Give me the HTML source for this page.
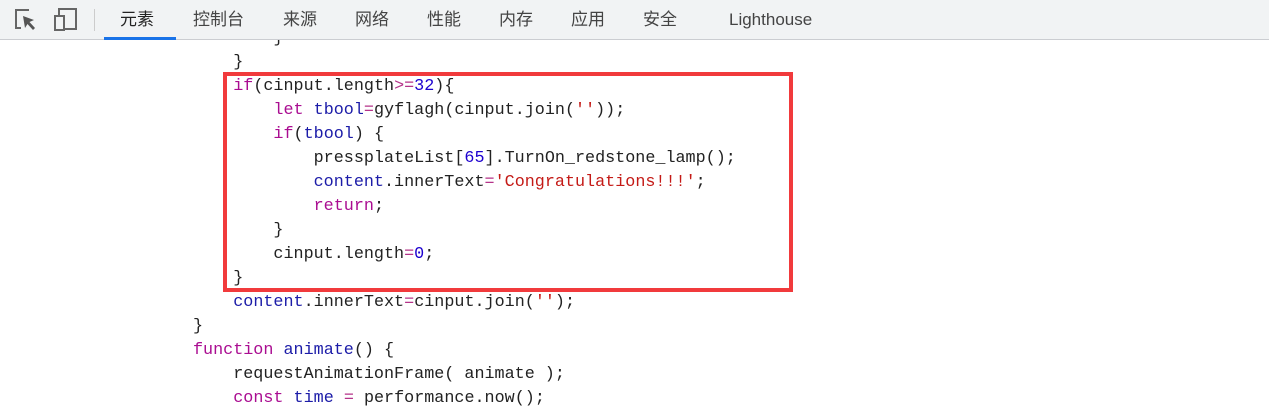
<!DOCTYPE html>
<html><head><meta charset="utf-8"><style>
body{margin:0;width:1269px;height:408px;background:#fff;overflow:hidden;position:relative;font-family:"Liberation Sans","Noto Sans CJK SC",sans-serif}
.bar{position:absolute;left:0;top:0;width:1269px;height:39px;background:#f1f3f4;border-bottom:1px solid #cbcdd1;z-index:2}
.tab{position:absolute;top:9px;font-size:17px;color:#444;line-height:22px}
.ul{position:absolute;left:104px;top:37px;width:72px;height:3px;background:#1a73e8}
.sep{position:absolute;left:94px;top:9px;width:1px;height:22px;background:#ccc}
.code{position:absolute;left:193px;top:27px;font-family:"Liberation Mono",monospace;font-size:16.75px;line-height:24px;white-space:pre;color:#222}
.k{color:#aa0d91}.v{color:#1c1ca8}.n{color:#1c00cf}.s{color:#c41a16}.o{color:#b5338a}
.box{position:absolute;left:223px;top:72px;width:562px;height:212px;border:4px solid #f13a3c}
</style></head><body>
<div class="bar">
<svg style="position:absolute;left:0;top:0" width="90" height="40">
<path d="M29 10H16V28H21" fill="none" stroke="#666" stroke-width="2"/>
<path d="M23 16L34 20L29.5 22L35 28L33 30L27.5 24L25 28Z" fill="#555"/>
<rect x="59" y="9" width="17" height="20" fill="none" stroke="#666" stroke-width="2"/>
<rect x="55" y="16" width="9" height="14" fill="#f1f3f4" stroke="#666" stroke-width="2"/>
</svg>
<div class="sep"></div>
<div class="tab" style="left:120px;color:#222">元素</div>
<div class="tab" style="left:193px">控制台</div>
<div class="tab" style="left:283px">来源</div>
<div class="tab" style="left:355px">网络</div>
<div class="tab" style="left:427px">性能</div>
<div class="tab" style="left:499px">内存</div>
<div class="tab" style="left:571px">应用</div>
<div class="tab" style="left:643px">安全</div>
<div class="tab" style="left:729px">Lighthouse</div>
<div class="ul"></div>
</div>
<div class="code">        }
    }
    <span class="k">if</span>(cinput.length<span class="o">&gt;=</span><span class="n">32</span>){
        <span class="k">let</span> <span class="v">tbool</span><span class="o">=</span>gyflagh(cinput.join(<span class="s">''</span>));
        <span class="k">if</span>(<span class="v">tbool</span>) {
            pressplateList[<span class="n">65</span>].TurnOn_redstone_lamp();
            <span class="v">content</span>.innerText<span class="o">=</span><span class="s">'Congratulations!!!'</span>;
            <span class="k">return</span>;
        }
        cinput.length<span class="o">=</span><span class="n">0</span>;
    }
    <span class="v">content</span>.innerText<span class="o">=</span>cinput.join(<span class="s">''</span>);
}
<span class="k">function</span> <span class="v">animate</span>() {
    requestAnimationFrame( animate );
    <span class="k">const</span> <span class="v">time</span> <span class="o">=</span> performance.now();</div>
<div class="box"></div>
</body></html>
